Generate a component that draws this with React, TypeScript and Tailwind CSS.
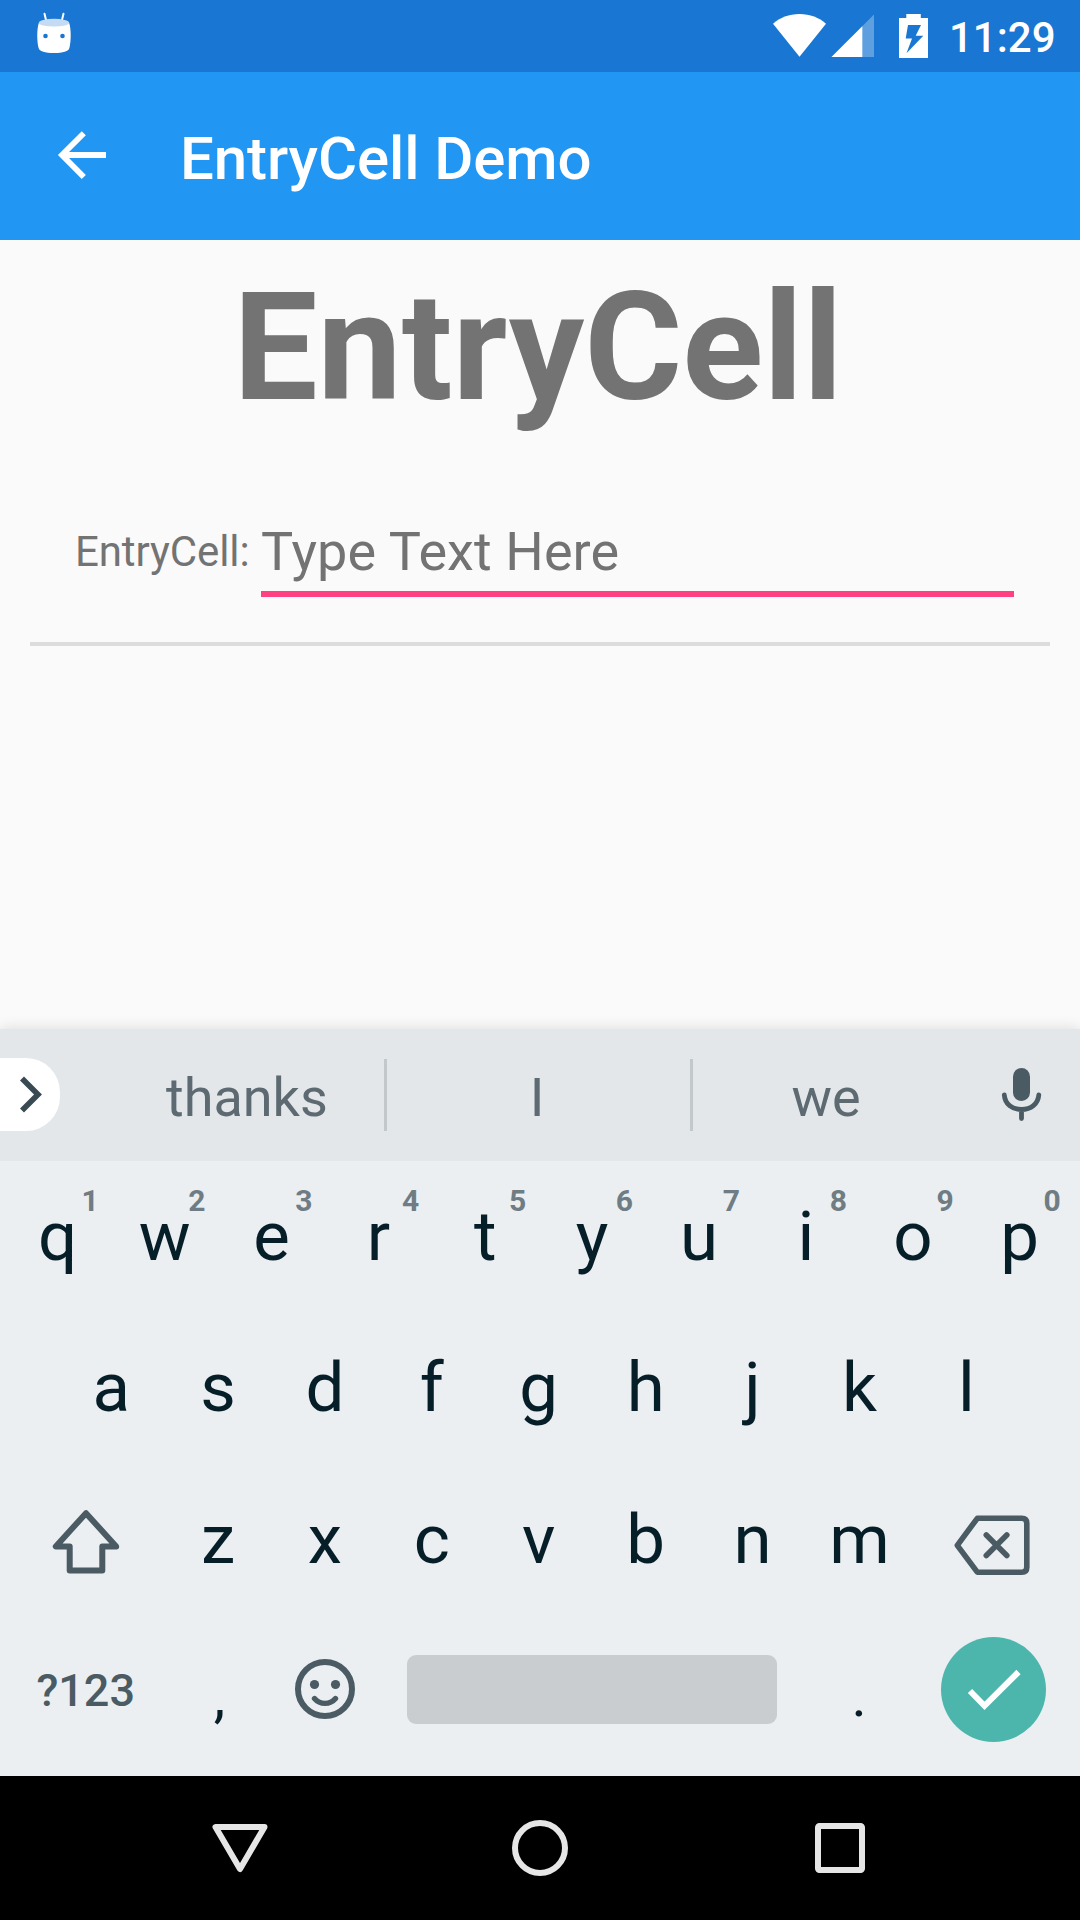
import type { ReactNode } from "react";

const topRow = ["q", "w", "e", "r", "t", "y", "u", "i", "o", "p"];
const hints = ["1", "2", "3", "4", "5", "6", "7", "8", "9", "0"];
const homeRow = ["a", "s", "d", "f", "g", "h", "j", "k", "l"];
const bottomRow = ["z", "x", "c", "v", "b", "n", "m"];

function StatusBar() {
  return (
    <div className="flex h-[72px] items-start bg-[#1976d2] text-white">
      <svg className="ml-[30px] h-[72px] w-[48px]" viewBox="30 0 48 72">
        <path d="M44.5 13.800 46.500 22M63.500 13.800 61.500 22" stroke="#fff" strokeWidth="2" strokeLinecap="round" />
        <path d="M38.800 23C36.800 29 36.800 41 38.600 48 39.400 51.500 45 53 54 53S68.600 51.500 69.400 48C71.200 41 71.200 29 69.200 23Z" fill="#fff" />
        <ellipse cx="54" cy="22.700" rx="15.200" ry="3.900" fill="#c5daf3" />
        <circle cx="45.500" cy="36" r="2.300" fill="#1976d2" />
        <circle cx="62.500" cy="36" r="2.300" fill="#1976d2" />
      </svg>
      <svg className="ml-[692px] h-[72px] w-[170px]" viewBox="770 0 170 72">
        <path d="M799.500 56.700 773 23.700C780 17.500 789 14 799.500 14S819 17.500 826 23.700Z" fill="#fff" />
        <path d="M874 14.500V57H831.500Z" fill="#fff" fillOpacity=".3" />
        <path d="M862.300 26.200V57H831.500Z" fill="#fff" />
        <path fillRule="evenodd" d="M906.300 14h14.500v4h7.200v40h-29V18h7.300ZM908 25l-2.300 13.500h6.300l-5.500 14.700 16.800-17.400h-7.600l5.300-10.800Z" fill="#fff" />
      </svg>
      <span className="ml-[9px] mt-[13px] text-[42px] leading-[49px] font-medium">11:29</span>
    </div>
  );
}

function AppBar() {
  return (
    <div className="flex h-[168px] items-center bg-[#2196f3] text-white">
      <svg className="ml-[54px] h-[56px] w-[56px]" viewBox="54 128 56 56" fill="none" stroke="#fff" strokeWidth="5.800">
        <path d="M106 155H63M83.800 133.300 62 155 83.800 177" />
      </svg>
      <h1 className="ml-[70px] mt-[5px] text-[60px] leading-[70px] font-medium tracking-[-0.1px]">EntryCell Demo</h1>
    </div>
  );
}

function Suggestion({ children, className }: { children: ReactNode; className: string }) {
  return <div className={`text-center text-[54px] leading-[64px] text-[#5d6a71] ${className}`}>{children}</div>;
}

function Suggestions() {
  return (
    <div className="flex h-[132px] items-center bg-[#e3e7ea] shadow-[0_-2px_12px_rgba(0,0,0,0.1)]">
      <div className="mt-[-1px] h-[73px] w-[60px] rounded-r-[34px] bg-white">
        <svg className="h-[73px] w-[60px]" viewBox="0 0 60 73" fill="none" stroke="#394a53" strokeWidth="5.600">
          <path d="M22 20.500 38 36.500 22 52.500" />
        </svg>
      </div>
      <Suggestion className="ml-[106px] mt-[6px] w-[156px]">thanks</Suggestion>
      <div className="ml-[62px] h-[72px] w-[3px] bg-[#c3c8cb]" />
      <Suggestion className="mt-[6px] w-[303px] pr-[3px]">I</Suggestion>
      <div className="h-[72px] w-[3px] bg-[#c3c8cb]" />
      <Suggestion className="mt-[6px] w-[266px]">we</Suggestion>
      <svg className="ml-[38px] h-[60px] w-[50px]" viewBox="997 1065 50 60" fill="none" stroke="#4a5b64">
        <rect x="1013" y="1068" width="17" height="33" rx="8.500" fill="#4a5b64" stroke="none" />
        <path d="M1004.300 1095C1005 1104 1012 1109.500 1021.500 1109.500S1038 1104 1038.800 1095M1021.500 1110V1118.500" strokeWidth="4.800" strokeLinecap="round" />
      </svg>
    </div>
  );
}

function Key({ label, hint }: { label: string; hint?: string }) {
  return (
    <div className="relative flex h-full w-[106.900px] shrink-0 justify-center pt-[36px] pr-[2.500px] text-[69px] leading-[80px] text-[#061e28]">
      {label}
      {hint && (
        <span className="absolute left-[67.500px] top-[22px] w-[34px] text-center text-[30px] leading-[36px] font-bold text-[#6f7c83]">
          {hint}
        </span>
      )}
    </div>
  );
}

function PunctuationKey({ label }: { label: string }) {
  return (
    <div className="flex w-[106.900px] shrink-0 justify-center pt-[41px] text-[58px] leading-[80px] text-[#061e28]">
      {label}
    </div>
  );
}

function Keyboard() {
  return (
    <div className="h-[615px] bg-[#ebeff2] px-[5.500px]">
      <div className="flex h-[151px]">
        {topRow.map((k, i) => (
          <Key key={k} label={k} hint={hints[i]} />
        ))}
      </div>
      <div className="flex h-[152px] justify-center">
        {homeRow.map((k) => (
          <Key key={k} label={k} />
        ))}
      </div>
      <div className="flex h-[151px]">
        <svg className="h-[151px] w-[160.400px]" viewBox="6 1464 160.400 151" fill="none" stroke="#4a5b64" strokeWidth="6" strokeLinejoin="round">
          <path d="M86 1513.200 55.800 1546.500H69.700V1570.500H102.300V1546.500H116.200Z" />
        </svg>
        {bottomRow.map((k) => (
          <Key key={k} label={k} />
        ))}
        <svg className="h-[151px] w-[160.300px]" viewBox="914.200 1464 160.300 151" fill="none" stroke="#4a5b64" strokeLinejoin="round">
          <path d="M977.500 1518.300H1022Q1027 1518.300 1027 1523.300V1567.200Q1027 1572.200 1022 1572.200H977.500L957.500 1545.300Z" strokeWidth="5.600" />
          <path d="M986.500 1535 1007 1555.500M1007 1535 986.500 1555.500" strokeWidth="5.600" strokeLinecap="round" />
        </svg>
      </div>
      <div className="flex h-[161px]">
        <div className="w-[160.400px] pt-[49px] text-center text-[45px] leading-[54px] font-medium text-[#4a5b64]">?123</div>
        <PunctuationKey label="," />
        <svg className="h-[151px] w-[106.900px]" viewBox="273 1615 106.900 151" fill="none" stroke="#4a5b64" strokeWidth="6">
          <circle cx="325" cy="1689" r="27" />
          <circle cx="314.500" cy="1684.500" r="4.600" fill="#4a5b64" stroke="none" />
          <circle cx="335.500" cy="1684.500" r="4.600" fill="#4a5b64" stroke="none" />
          <path d="M314.500 1698.500C320 1705 330 1705 335.500 1698.500" strokeWidth="5.400" strokeLinecap="round" />
        </svg>
        <div className="ml-[27px] mt-[40px] h-[69px] w-[370px] rounded-[9px] bg-[#c9cdd0]" />
        <div className="ml-[29px] flex">
          <PunctuationKey label="." />
        </div>
        <div className="ml-[28px] mt-[22px] h-[105px] w-[105px] rounded-full bg-[#4db6ac]">
          <svg className="h-[105px] w-[105px]" viewBox="0.500 1 105 105" fill="none" stroke="#fff" strokeWidth="6">
            <path d="M29.500 55 44 69.800 78 36" />
          </svg>
        </div>
      </div>
    </div>
  );
}

export default function App() {
  return (
    <div className="flex h-[1920px] w-[1080px] flex-col overflow-hidden bg-[#fafafa] font-['Roboto',sans-serif]">
      <StatusBar />
      <AppBar />
      <main className="flex h-[789px] flex-col">
        <h2 className="mt-[20px] pr-[4px] text-center text-[150px] leading-[176px] font-bold text-[#737373]">EntryCell</h2>
        <div className="mx-[30px] mt-[60px] flex h-[150px] border-b-4 border-[#dcdcdc] pl-[45px] pr-[36px] text-[#737373]">
          <label className="mt-[31px] w-[186px] whitespace-nowrap text-[42px] leading-[49px] tracking-[-0.1px]">EntryCell:</label>
          <div className="mt-[20px] h-[81px] flex-1 border-b-6 border-[#ff4081] pt-[4px] text-[54px] leading-[64px] tracking-[0.1px]">Type Text Here</div>
        </div>
      </main>
      <Suggestions />
      <Keyboard />
      <nav className="flex h-[144px] items-center justify-around bg-black px-[90px]">
        <svg className="h-[60px] w-[60px]" viewBox="0 0 60 60" fill="none" stroke="#e6e6e6" strokeWidth="6" strokeLinejoin="round">
          <path d="M5.500 9H54.500L30 51Z" />
        </svg>
        <svg className="h-[60px] w-[60px]" viewBox="0 0 60 60" fill="none" stroke="#e6e6e6" strokeWidth="6">
          <circle cx="30" cy="30" r="25" />
        </svg>
        <svg className="h-[60px] w-[60px]" viewBox="0 0 60 60" fill="none" stroke="#e6e6e6" strokeWidth="6">
          <rect x="8" y="8" width="44" height="44" rx="1.500" />
        </svg>
      </nav>
    </div>
  );
}
